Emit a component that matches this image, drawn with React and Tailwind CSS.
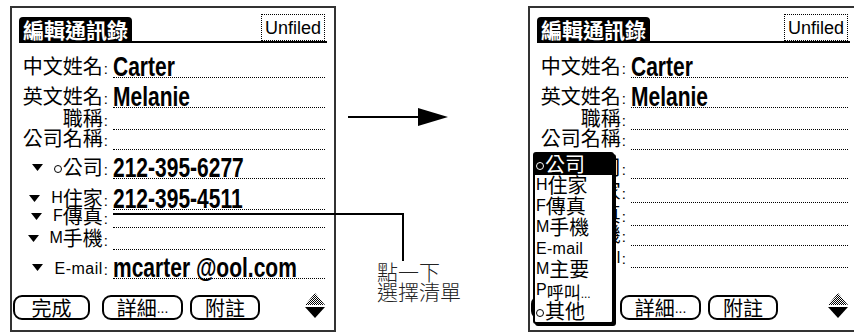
import React from "react";

const CJK = "font-['Noto_Sans_CJK_TC','Noto_Sans_CJK_SC',sans-serif]";
const LAT = "font-['Liberation_Sans',Arial,sans-serif]";
const VAL = "font-['Liberation_Sans',Arial,sans-serif]";

function Tri() {
  return (
    <svg width="11" height="7" viewBox="0 0 11 7" className="mb-[6px] mr-[11px] shrink-0">
      <path d="M0 0H11L5.5 7Z" fill="#000" />
    </svg>
  );
}

function Ring({ white }) {
  return (
    <span
      className={`inline-block w-[8px] h-[8px] rounded-full border-[1.5px] mb-[4px] mr-[1px] shrink-0 ${
        white ? "border-white" : "border-black"
      }`}
    />
  );
}

function Prefix({ p, white }) {
  if (!p) return null;
  if (p === "ring") return <Ring white={white} />;
  return <span className={`${LAT} text-[16px] leading-[16px] mb-[2px]`}>{p}</span>;
}

function Row({ h, label, value, tri, prefix, email }) {
  return (
    <div className={`flex items-end ${h}`}>
      <div className="w-[96px] shrink-0 flex items-end justify-end pb-[2px] leading-none">
        {tri && <Tri />}
        <Prefix p={prefix} />
        {email ? (
          <span className={`${LAT} text-[16px] leading-[16px] tracking-[0.5px]`}>E-mail</span>
        ) : (
          <span className={`${CJK} text-[20px] leading-[20px]`}>{label}</span>
        )}
        <span className={`${LAT} text-[15px] leading-[15px] ml-[1px]`}>:</span>
      </div>
      <div className="flex-1 min-w-0 ml-[5px] mr-[9px] h-full border-b border-dotted border-black flex items-end">
        {value && (
          <span
            className={`${VAL} inline-block origin-bottom-left scale-x-[0.75] font-bold text-[28px] leading-[20px] whitespace-nowrap`}
          >
            {value}
          </span>
        )}
      </div>
    </div>
  );
}

function Btn({ w, ml, children }) {
  return (
    <div
      className={`${w} ${ml} h-[25px] shrink-0 border-2 border-black rounded-[9px] flex items-center justify-center ${CJK} text-[20px] leading-none`}
    >
      {children}
    </div>
  );
}

function ScrollArrows({ id }) {
  return (
    <svg width="20" height="26" viewBox="0 0 20 26" className="ml-auto mr-[9px] -mt-[3px]">
      <defs>
        <pattern id={id} width="2" height="2" patternUnits="userSpaceOnUse">
          <rect width="1" height="1" fill="#000" />
          <rect x="1" y="1" width="1" height="1" fill="#000" />
        </pattern>
      </defs>
      <path d="M10 0L20 12H0Z" fill={`url(#${id})`} />
      <path d="M0 14H20L10 25Z" fill="#000" />
    </svg>
  );
}

const common = [
  { h: "h-[35px]", label: "中文姓名", value: "Carter" },
  { h: "h-[30px]", label: "英文姓名", value: "Melanie" },
  { h: "h-[22px]", label: "職稱" },
  { h: "h-[20px]", label: "公司名稱" },
];

const leftRows = [
  ...common,
  { h: "h-[29px]", tri: true, prefix: "ring", label: "公司", value: "212-395-6277" },
  { h: "h-[31px]", tri: true, prefix: "H", label: "住家", value: "212-395-4511" },
  { h: "h-[18px]", tri: true, prefix: "F", label: "傳真" },
  { h: "h-[22px]", tri: true, prefix: "M", label: "手機" },
  { h: "h-[29px]", tri: true, email: true, value: "mcarter @ool.com" },
];

const rightRows = [
  ...common,
  { h: "h-[29px]", tri: true, prefix: "ring", label: "公司" },
  { h: "h-[24px]", tri: true, prefix: "H", label: "住家" },
  { h: "h-[23px]", tri: true, prefix: "F", label: "傳真" },
  { h: "h-[20px]", tri: true, prefix: "M", label: "手機" },
  { h: "h-[22px]", tri: true, email: true },
];

function PopItem({ p, label, sel, small, email }) {
  return (
    <div className={`h-[21px] flex items-end pl-[1px] pb-[1px] leading-none ${sel ? "bg-black text-white" : ""}`}>
      {email ? (
        <span className={`${LAT} text-[16px] leading-[16px] tracking-[0.3px] mb-[1px]`}>E-mail</span>
      ) : (
        <>
          <Prefix p={p} white={sel} />
          <span className={`${CJK} ${small ? "text-[17px] leading-[17px]" : "text-[20px] leading-[20px]"}`}>
            {label}
          </span>
          {small && <span className={`${LAT} text-[12px] leading-[12px]`}>...</span>}
        </>
      )}
    </div>
  );
}

function Popup() {
  return (
    <div className="absolute left-[3px] top-[144px] w-[81px] bg-white border-2 border-black rounded-[3px] shadow-[2px_2px_0_#000] flex flex-col">
      <PopItem p="ring" label="公司" sel />
      <PopItem p="H" label="住家" />
      <PopItem p="F" label="傳真" />
      <PopItem p="M" label="手機" />
      <PopItem email />
      <PopItem p="M" label="主要" />
      <PopItem p="P" label="呼叫" small />
      <PopItem p="ring" label="其他" />
    </div>
  );
}

function Panel({ rows, btnMt, className, popup, id }) {
  return (
    <div className={`relative shrink-0 h-[326px] border-2 border-[#333] bg-white flex flex-col ${className}`}>
      <div className="flex items-end h-[26px] mt-[9px] ml-[7px] mr-[7px] border-b-2 border-black">
        <div className={`h-[24px] px-[4px] bg-black text-white rounded-t-[4px] ${CJK} font-bold text-[21px] leading-[24px]`}>
          編輯通訊錄
        </div>
        <div className={`ml-auto mr-[2px] h-[27px] shrink-0 px-[3px] border border-dotted border-black flex items-center ${LAT} text-[18px] leading-none`}>
          Unfiled
        </div>
      </div>
      {rows.map((r, i) => (
        <Row key={i} {...r} />
      ))}
      <div className={`flex items-center ${btnMt}`}>
        <Btn w="w-[77px]" ml="ml-[1px]">完成</Btn>
        <Btn w="w-[81px]" ml="ml-[12px]">
          詳細<span className={`${LAT} text-[14px] self-end mb-[3px]`}>...</span>
        </Btn>
        <Btn w="w-[70px]" ml="ml-[7px]">附註</Btn>
        <ScrollArrows id={id} />
      </div>
      {popup && <Popup />}
    </div>
  );
}

export default function App() {
  return (
    <div className="w-[854px] h-[333px] bg-white relative overflow-hidden flex items-start text-black">
      <Panel rows={leftRows} btnMt="mt-[16px]" className="ml-[10px] mt-[6px] w-[326px]" id="dA" />
      <div className="w-[192px] shrink-0 flex flex-col">
        <svg width="100" height="18" viewBox="0 0 100 18" className="ml-[12px] mt-[108px]">
          <rect x="0" y="8" width="72" height="2" fill="#000" />
          <path d="M70 0L100 9L70 18Z" fill="#000" />
        </svg>
        <div className={`ml-[41px] mt-[135px] ${CJK} font-light text-[21px] leading-[20px] text-[#222]`}>
          點一下
          <br />
          選擇清單
        </div>
      </div>
      <Panel rows={rightRows} btnMt="mt-[27px]" className="mt-[6px] w-[331px]" popup id="dB" />
      <div className="absolute left-[113px] top-[213px] w-[291px] h-[2px] bg-black" />
      <div className="absolute left-[402px] top-[213px] w-[2px] h-[48px] bg-black" />
    </div>
  );
}
